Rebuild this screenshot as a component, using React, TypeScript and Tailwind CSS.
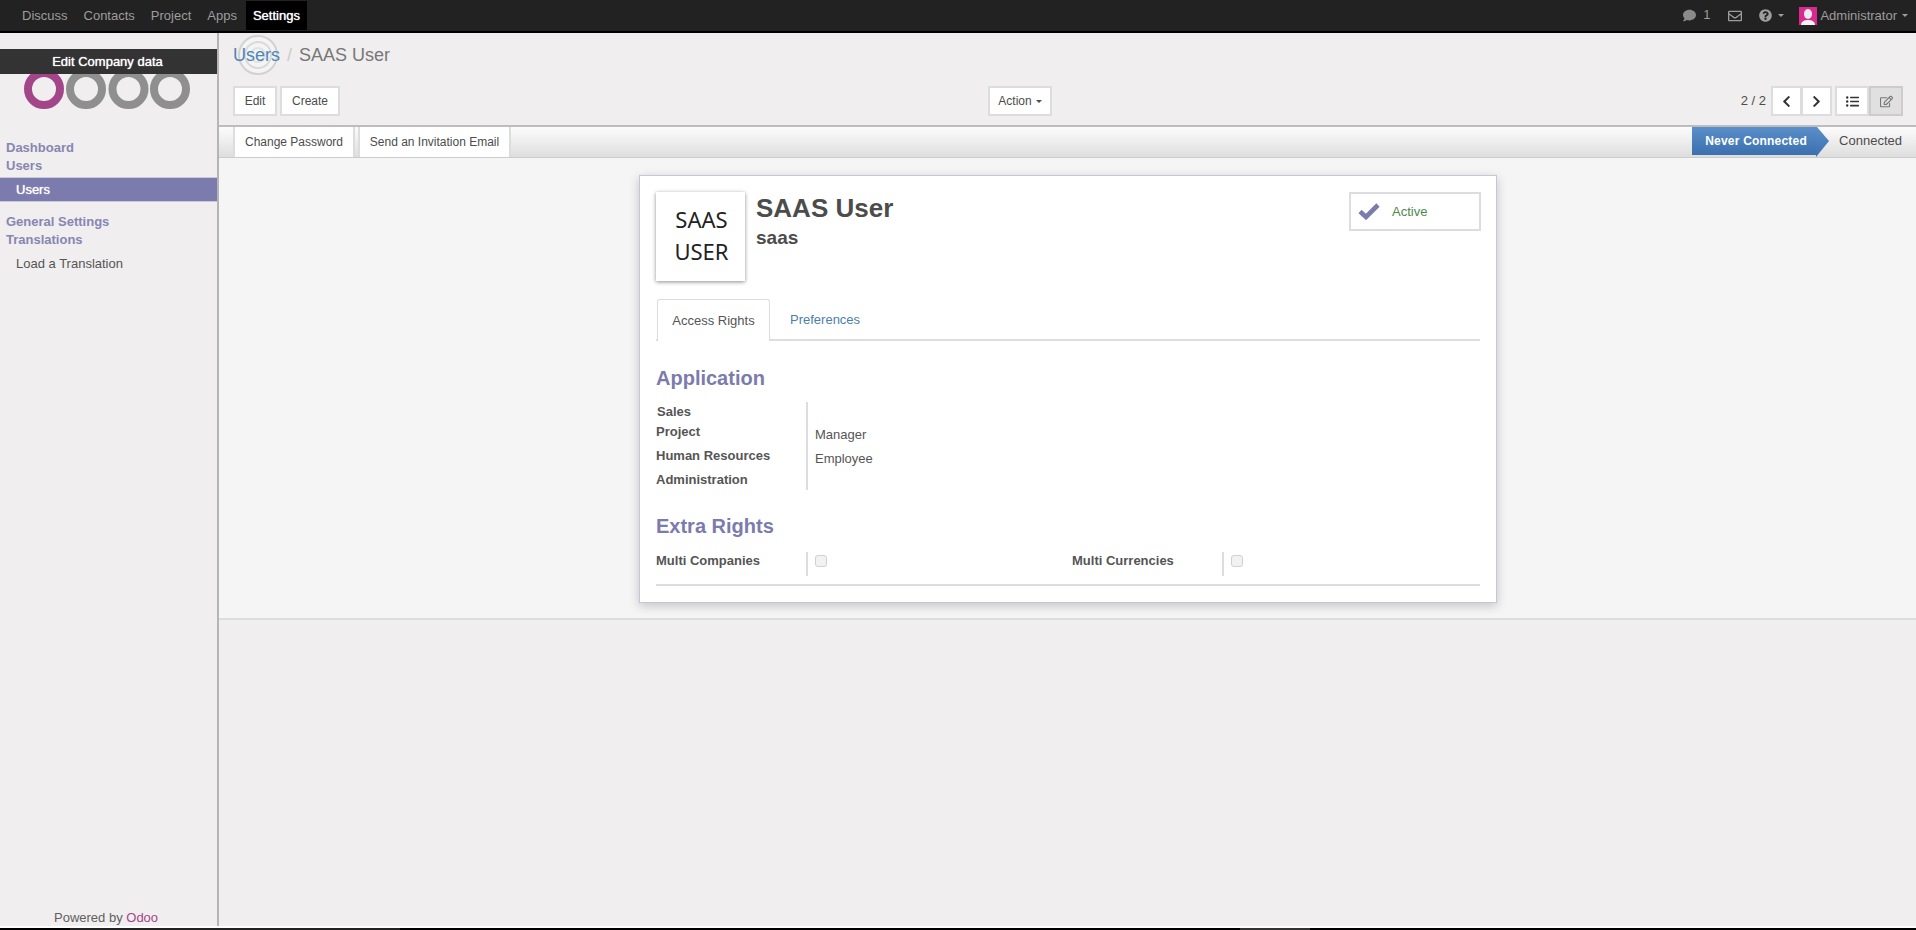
import {
  FaChevronLeft,
  FaChevronRight,
  FaComment,
  FaListUl,
  FaQuestionCircle,
  FaRegEdit,
  FaRegEnvelope,
} from "react-icons/fa";

function Caret({ className = "border-t-[#9d9d9d]" }: { className?: string }) {
  return <span className={`inline-block h-0 w-0 border-x-[3px] border-t-[3px] border-x-transparent ${className}`} />;
}

function Btn({ children, className = "", active = false }: { children: React.ReactNode; className?: string; active?: boolean }) {
  const look = active ? "border-[#cccccc] bg-[#e0e0e0] text-[#777777]" : "border-[#dddddd] bg-white text-[#4c4c4c]";
  return (
    <button className={`flex h-[30px] items-center justify-center border-2 text-[12px] ${look} ${className}`}>
      {children}
    </button>
  );
}

function Logo() {
  const rings = [
    { cx: 20, color: "#a24689" },
    { cx: 62, color: "#8f8f8f" },
    { cx: 104.5, color: "#8f8f8f" },
    { cx: 146, color: "#8f8f8f" },
  ];
  return (
    <svg width="168" height="40" viewBox="0 0 168 40" className="ml-[24px] mt-[36px] block">
      {rings.map((r) => (
        <circle key={r.cx} cx={r.cx} cy="20" r="16" fill="none" stroke={r.color} strokeWidth="8" />
      ))}
    </svg>
  );
}

function Sidebar() {
  return (
    <aside className="relative flex w-[217px] shrink-0 flex-col text-[13px]">
      <div className="absolute left-0 right-0 top-[16px] z-10 flex h-[25px] items-center justify-center bg-[#333333] pr-[2px] text-[13px] text-white [text-shadow:0_0_1px_#ffffff]">
        Edit Company data
      </div>
      <Logo />
      <div className="mt-[30px] pl-[6px] font-bold leading-[18px] text-[#8786b3]">
        <div>Dashboard</div>
        <div>Users</div>
      </div>
      <div className="mt-[2px] flex h-[25px] items-center border-y border-[#c9c8dc] bg-[#7c7bad] pl-[16px] text-white [text-shadow:0_0_1px_#ffffff]">
        Users
      </div>
      <div className="mt-[11px] pl-[6px] font-bold leading-[18px] text-[#8786b3]">
        <div>General Settings</div>
        <div>Translations</div>
      </div>
      <div className="mt-[6px] pl-[16px] leading-[18px] text-[#555555]">Load a Translation</div>
      <div className="-mb-[1px] mt-auto pl-[54px] text-[13px] leading-[18px] text-[#5f5f5f]">
        Powered by <span className="text-[#a24689]">Odoo</span>
      </div>
    </aside>
  );
}

function TopNav() {
  return (
    <nav className="flex h-[33px] shrink-0 items-center justify-between border-b-2 border-black bg-[#222222] text-[13px] text-[#9d9d9d]">
      <div className="flex items-center pl-[14px]">
        <a className="px-2">Discuss</a>
        <a className="px-2">Contacts</a>
        <a className="px-2">Project</a>
        <a className="px-2">Apps</a>
        <a className="ml-[1px] flex h-[29px] items-center bg-black px-[7px] text-white [text-shadow:0_0_1px_#ffffff]">Settings</a>
      </div>
      <div className="flex items-center pr-[8px]">
        <FaComment className="text-[13px] text-[#8a8a8a]" />
        <span className="ml-[7px] mb-[2px]">1</span>
        <FaRegEnvelope className="ml-[18px] text-[14px] text-[#9d9d9d]" />
        <FaQuestionCircle className="ml-[17px] text-[13px]" />
        <Caret className="ml-[6px] border-t-[#9d9d9d]" />
        <svg width="18" height="18" viewBox="0 0 18 18" className="ml-[15px]">
          <rect width="18" height="18" fill="#d82a8c" />
          <ellipse cx="9" cy="7" rx="4" ry="5" fill="#eceaf0" />
          <path d="M2 18c0-4 4-5 7-5s7 1 7 5z" fill="#f4f2f5" />
        </svg>
        <span className="ml-[3px]">Administrator</span>
        <Caret className="ml-[5px] border-t-[#9d9d9d]" />
      </div>
    </nav>
  );
}

function ControlPanel() {
  return (
    <div className="h-[94px] shrink-0 border-b-2 border-[#bdbdbd] pl-[14px] pr-[13px]">
      <div className="relative flex h-[53px] items-start pt-[10px] text-[18px] leading-[24px]">
        <svg width="44" height="44" viewBox="0 0 44 44" className="absolute left-[3px] top-0">
          <circle cx="22" cy="22" r="19" fill="#f4f4f4" stroke="#d2d2d2" strokeWidth="2" />
          <circle cx="22" cy="22" r="13" fill="none" stroke="#dadada" strokeWidth="2" />
          <circle cx="22" cy="22" r="7" fill="none" stroke="#e2e2e2" strokeWidth="2" />
        </svg>
        <a className="relative text-[#4f86b9]">Users</a>
        <span className="relative ml-[7px] text-[#cccccc]">/</span>
        <span className="relative ml-[7px] text-[#777777]">SAAS User</span>
      </div>
      <div className="grid grid-cols-[755px_1fr_auto] items-center">
        <div className="flex gap-[3px]">
          <Btn className="w-[44px]">Edit</Btn>
          <Btn className="w-[60px]">Create</Btn>
        </div>
        <div>
          <Btn className="w-[64px] gap-[4px]">
            Action <Caret className="border-t-[#4c4c4c]" />
          </Btn>
        </div>
        <div className="flex items-center text-[13px] text-[#4c4c4c]">
          <span className="mr-[5px]">2 / 2</span>
          <Btn className="w-[31px] text-[13px] text-[#333333]">
            <FaChevronLeft />
          </Btn>
          <Btn className="-ml-[1px] w-[31px] text-[13px] text-[#333333]">
            <FaChevronRight />
          </Btn>
          <Btn className="ml-[3px] w-[34px] text-[13px] text-[#333333]">
            <FaListUl />
          </Btn>
          <Btn active className="w-[34px] text-[13px]">
            <FaRegEdit />
          </Btn>
        </div>
      </div>
    </div>
  );
}

function StatusBar() {
  return (
    <div className="flex h-[31px] shrink-0 items-start justify-between border-b border-[#cccccc] bg-gradient-to-b from-[#fcfcfc] to-[#dedede] pl-[14px] pr-[14px]">
      <div className="flex gap-[3px]">
        <button className="flex h-[30px] w-[122px] items-center justify-center border-x-2 border-[#dddddd] bg-white text-[12px] text-[#4c4c4c]">
          Change Password
        </button>
        <button className="flex h-[30px] w-[153px] items-center justify-center border-x-2 border-[#dddddd] bg-white text-[12px] text-[#4c4c4c]">
          Send an Invitation Email
        </button>
      </div>
      <div className="flex h-[30px] items-start">
        <div className="flex h-[28px] w-[124px] items-center justify-center bg-gradient-to-b from-[#5b8fca] to-[#3b6fae] pl-[4px] text-[12px] font-bold tracking-[0.2px] text-white">
          Never Connected
        </div>
        <svg width="13" height="30" viewBox="0 0 13 30" className="block">
          <defs>
            <linearGradient id="stat" x1="0" y1="0" x2="0" y2="1">
              <stop offset="0" stopColor="#5b8fca" />
              <stop offset="1" stopColor="#3b6fae" />
            </linearGradient>
          </defs>
          <polygon points="0,0 1,0 13,14 0,30" fill="url(#stat)" />
        </svg>
        <span className="ml-[10px] flex h-[28px] items-center text-[13px] text-[#4c4c4c]">Connected</span>
      </div>
    </div>
  );
}

function Checkbox() {
  return <span className="mt-[3px] block h-[12px] w-[12px] rounded-[3px] border border-[#d0d0d0] bg-[#f2f2f2]" />;
}

function Sheet() {
  return (
    <div className="h-[462px] shrink-0 border-b-2 border-[#dddddd] bg-[#f5f5f5] pt-[17px]">
      <div className="ml-[420px] h-[428px] w-[858px] border border-[#c6c5da] bg-white px-[16px] pt-[16px] text-[13px] text-[#555555] shadow-[0_3px_10px_rgba(0,0,0,0.2)]">
        <div className="flex h-[90px] items-start">
          <div className="flex h-[89px] w-[89px] flex-col items-center justify-center bg-white pb-[3px] pl-[2px] font-['Noto_Sans',sans-serif] text-[22px] leading-[32px] text-[#222222] shadow-[0_1px_4px_rgba(0,0,0,0.45)]">
            <span>SAAS</span>
            <span>USER</span>
          </div>
          <div className="ml-[11px] font-bold text-[#4c4c4c]">
            <div className="text-[26px] leading-[32px]">SAAS User</div>
            <div className="mt-[2px] text-[19px] leading-[24px]">saas</div>
          </div>
          <div className="-mr-[1px] ml-auto flex h-[39px] w-[132px] items-center border-2 border-[#dddddd]">
            <svg width="22" height="17" viewBox="0 0 22 17" className="ml-[7px]">
              <polyline points="2,8.5 8,14 20,2" fill="none" stroke="#7c7bad" strokeWidth="4.6" />
            </svg>
            <span className="ml-[12px] text-[13px] text-[#4c8a4c]">Active</span>
          </div>
        </div>
        <div className="mt-[17px] flex h-[42px] border-b-2 border-[#dddddd]">
          <div className="-mb-[2px] ml-[1px] flex w-[113px] items-center justify-center rounded-t-[3px] border border-b-0 border-[#dddddd] bg-white">
            Access Rights
          </div>
          <div className="ml-[20px] flex items-center pt-[2px] text-[#4a7fb0]">Preferences</div>
        </div>
        <h2 className="mt-[23px] text-[20px] font-bold leading-[28px] text-[#7c7bad]">Application</h2>
        <div className="mt-[10px] flex h-[88px]">
          <div className="w-[150px] font-bold">
            <div className="flex h-[19px] items-center pl-[1px]">Sales</div>
            <div className="flex h-[22px] items-center">Project</div>
            <div className="flex h-[25px] items-center">Human Resources</div>
            <div className="flex h-[23px] items-center">Administration</div>
          </div>
          <div className="border-l-2 border-[#dddddd] pl-[7px] pt-[21px]">
            <div className="flex h-[24px] items-center">Manager</div>
            <div className="flex h-[24px] items-center">Employee</div>
          </div>
        </div>
        <h2 className="mt-[22px] text-[20px] font-bold leading-[28px] text-[#7c7bad]">Extra Rights</h2>
        <div className="mt-[12px] flex h-[24px] items-start">
          <div className="w-[150px] font-bold leading-[18px]">Multi Companies</div>
          <div className="h-[24px] w-[266px] border-l-2 border-[#dddddd] pl-[7px]">
            <Checkbox />
          </div>
          <div className="w-[150px] font-bold leading-[18px]">Multi Currencies</div>
          <div className="h-[24px] border-l-2 border-[#dddddd] pl-[7px]">
            <Checkbox />
          </div>
        </div>
        <div className="mt-[8px] border-t-2 border-[#dddddd]" />
      </div>
    </div>
  );
}

export default function App() {
  return (
    <div className="flex h-[930px] w-[1916px] flex-col overflow-hidden bg-[#f0eeee] font-['Liberation_Sans',Arial,sans-serif]">
      <TopNav />
      <div className="flex min-h-0 flex-1">
        <Sidebar />
        <main className="flex min-w-0 flex-1 flex-col border-l-2 border-[#b5b5b5]">
          <ControlPanel />
          <StatusBar />
          <Sheet />
        </main>
      </div>
      <div className="h-[2px] shrink-0 bg-white" />
      <div className="flex h-[2px] shrink-0 bg-black">
        <div className="ml-[70px] w-[330px] bg-[#222222]" />
        <div className="ml-[840px] w-[70px] bg-[#333333]" />
      </div>
    </div>
  );
}
